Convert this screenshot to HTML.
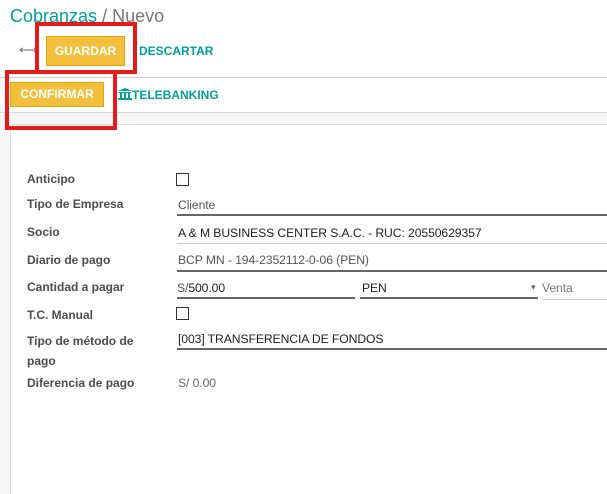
<!DOCTYPE html>
<html><head><style>
*{margin:0;padding:0;box-sizing:border-box}
body{width:607px;height:494px;overflow:hidden;background:#fff;font-family:"Liberation Sans",Arial,sans-serif;position:relative}
.a{position:absolute;white-space:nowrap}
.lbl{position:absolute;left:27px;font-size:12px;font-weight:bold;color:#4c4c4c}
.val{position:absolute;font-size:12.2px;color:#222;letter-spacing:-0.1px}
.ul{position:absolute;height:2px;background:#666}
.ull{position:absolute;height:1px;background:#ccc}
.btn{position:absolute;background:#f3c03e;border:1px solid #e0a800;color:#fff;font-weight:bold;font-size:12px;text-align:center}
.red{position:absolute;border:4px solid #e31b1b}
.cb{position:absolute;width:13px;height:13px;border:1px solid #333;background:#fff}
</style></head><body>
<div class="a" style="left:10px;top:6px;font-size:18px;color:#00a09d">Cobranzas <span style="color:#777">/ Nuevo</span></div>
<div class="a" style="left:19px;top:42px;font-size:13px;color:#666">⟷</div>
<div class="btn" style="left:46px;top:36px;width:79px;height:30px;line-height:28px">GUARDAR</div>
<div class="a" style="left:139px;top:44px;font-size:12px;font-weight:bold;color:#00a09d">DESCARTAR</div>
<div class="a" style="left:0;top:77px;width:607px;height:1px;background:#d0d0d0"></div>
<div class="btn" style="left:10px;top:82px;width:94px;height:25px;line-height:23px">CONFIRMAR</div>
<div class="a" style="left:118px;top:88px;font-size:12px;font-weight:bold;color:#00a09d"><svg width="14" height="12" viewBox="0 0 14 12" style="vertical-align:-1px"><path d="M7 0L0 3h14z M1 4h12v1H1z M2 5h2v5H2z M6 5h2v5H6z M10 5h2v5h-2z M0 10h14v2H0z" fill="#00a09d"/></svg>TELEBANKING</div>
<div class="a" style="left:0;top:112px;width:607px;height:382px;background:#f7f7f7;border-top:1px solid #d8d8d8"></div>
<div class="a" style="left:10px;top:124px;width:597px;height:370px;background:#fff;border-left:1px solid #dcdcdc;border-top:1px solid #dcdcdc"></div>
<div class="red" style="left:35px;top:22px;width:102px;height:52px"></div>
<div class="red" style="left:5px;top:70px;width:112px;height:60px"></div>

<div class="lbl" style="top:172px">Anticipo</div><div class="cb" style="left:176px;top:173px"></div>
<div class="lbl" style="top:197px">Tipo de Empresa</div><div class="val" style="left:178px;top:198px;color:#555">Cliente</div><div class="ul" style="left:177px;top:214px;width:430px"></div>
<div class="lbl" style="top:225px">Socio</div><div class="val" style="left:178px;top:226px">A &amp; M BUSINESS CENTER S.A.C. - RUC: 20550629357</div><div class="ull" style="left:177px;top:243px;width:430px"></div>
<div class="lbl" style="top:253px">Diario de pago</div><div class="val" style="left:178px;top:253px;color:#555">BCP MN - 194-2352112-0-06 (PEN)</div><div class="ul" style="left:177px;top:270px;width:430px"></div>
<div class="lbl" style="top:280px">Cantidad a pagar</div><div class="val" style="left:177px;top:281px;color:#555">S/<span style="color:#222">500.00</span></div><div class="ul" style="left:177px;top:297px;width:178px"></div>
<div class="val" style="left:362px;top:281px">PEN</div><div class="a" style="left:531px;top:282px;font-size:9px;color:#666">▾</div><div class="ul" style="left:360px;top:297px;width:178px"></div>
<div class="val" style="left:542px;top:281px;color:#777">Venta</div><div class="ull" style="left:542px;top:299px;width:65px"></div>
<div class="lbl" style="top:308px">T.C. Manual</div><div class="cb" style="left:176px;top:307px"></div>
<div class="lbl" style="top:331px;line-height:20px">Tipo de método de<br>pago</div><div class="val" style="left:178px;top:332px">[003] TRANSFERENCIA DE FONDOS</div><div class="ul" style="left:177px;top:348px;width:430px"></div>
<div class="lbl" style="top:376px">Diferencia de pago</div><div class="val" style="left:178px;top:376px;color:#666">S/ 0.00</div>
</body></html>
